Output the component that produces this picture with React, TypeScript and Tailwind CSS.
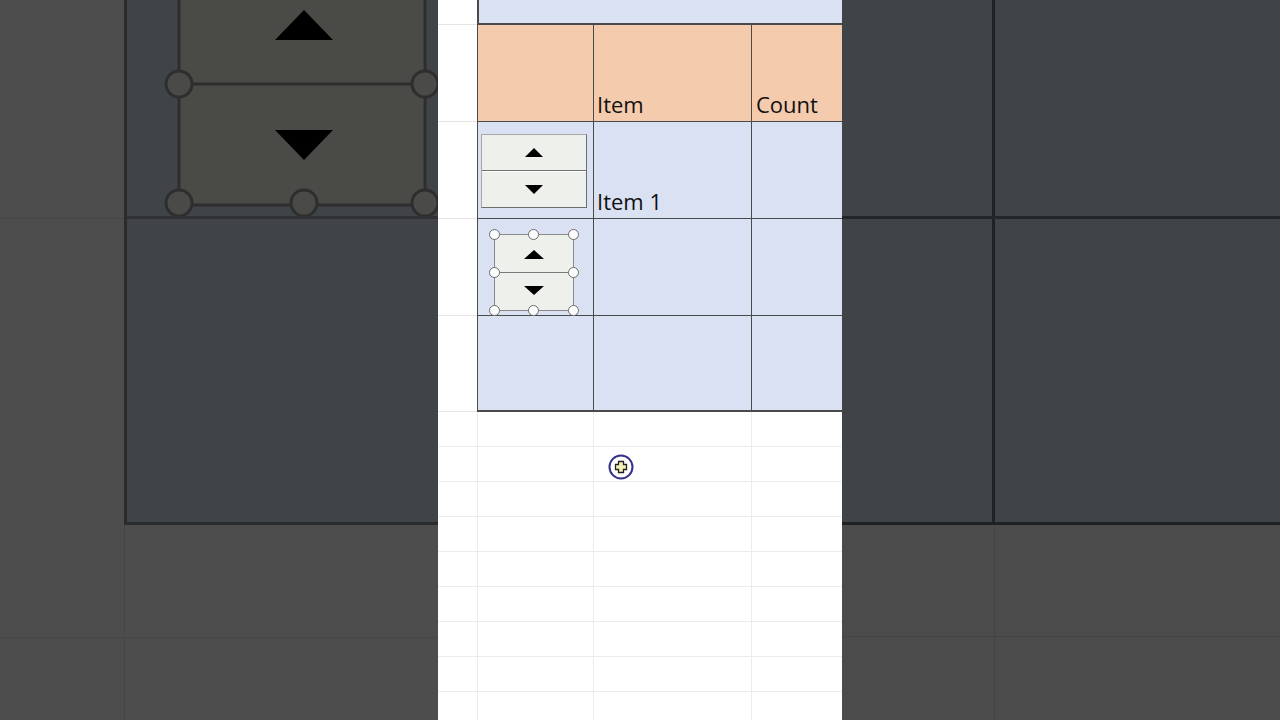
const font = { fontFamily: '"Open Sans", "Noto Sans", sans-serif' };

function Up({ w, h }: { w: number; h: number }) {
  return (
    <svg width={w} height={h} viewBox={`0 0 ${w} ${h}`}>
      <polygon points={`0,${h} ${w},${h} ${w / 2},0`} fill="#000" />
    </svg>
  );
}

function Down({ w, h }: { w: number; h: number }) {
  return (
    <svg width={w} height={h} viewBox={`0 0 ${w} ${h}`}>
      <polygon points={`0,0 ${w},0 ${w / 2},${h}`} fill="#000" />
    </svg>
  );
}

function Handle({ className }: { className: string }) {
  return (
    <div
      className={`absolute w-[11px] h-[11px] rounded-full bg-white border border-[#6b6b6b] ${className}`}
    />
  );
}

function LeftPane() {
  return (
    <div className="w-[438px] h-full bg-[#4d4d4d] flex flex-col">
      <div className="flex h-[525px]">
        <div className="w-[124px] flex flex-col">
          <div className="h-[219px] border-b border-[#464646]" />
        </div>
        <div className="flex-1 bg-[#404449] border-l-[3px] border-b-[3px] border-[#2a2b2d] flex flex-col">
          <div className="h-[219px] border-b-[3px] border-[#2f3134] relative overflow-hidden">
            {/* zoomed spinner control */}
            <svg className="absolute left-0 top-0" width="313" height="216" viewBox="0 0 313 216">
              <rect x="52" y="-40" width="246" height="245" fill="#4a4a47" stroke="#2e2e2e" strokeWidth="3" />
              <line x1="52" y1="84" x2="298" y2="84" stroke="#2e2e2e" strokeWidth="3" />
              <polygon points="148,40 206,40 177,10" fill="#000" />
              <polygon points="148,130 206,130 177,160" fill="#000" />
              {[
                [52, 84],
                [298, 84],
                [52, 203],
                [177, 203],
                [298, 203],
              ].map(([cx, cy], i) => (
                <circle key={i} cx={cx} cy={cy} r="13" fill="#4a4a48" stroke="#2e2e2e" strokeWidth="3" />
              ))}
            </svg>
          </div>
        </div>
      </div>
      <div className="flex h-[113px] border-b border-[#464646]">
        <div className="w-[125px] border-r border-[#464646]" />
      </div>
      <div className="flex flex-1">
        <div className="w-[125px] border-r border-[#464646]" />
      </div>
    </div>
  );
}

function RightPane() {
  return (
    <div className="w-[438px] h-full bg-[#4b4b4b] flex flex-col">
      <div className="h-[525px] bg-[#404449] border-b-[3px] border-[#1f2225] flex flex-col">
        <div className="flex h-[219px] border-b-[3px] border-[#23262a]">
          <div className="w-[153px] border-r-[3px] border-[#1f2225]" />
        </div>
        <div className="flex flex-1">
          <div className="w-[153px] border-r-[3px] border-[#1f2225]" />
        </div>
      </div>
      <div className="flex h-[112px] border-b border-[#444]">
        <div className="w-[153px] border-r border-[#444]" />
      </div>
      <div className="flex flex-1">
        <div className="w-[153px] border-r border-[#444]" />
      </div>
    </div>
  );
}

const colA = "w-[39px] shrink-0 border-b border-[#e4e4e4]";
const dark = "border-[#4a4a4a]";

function BodyRow({
  h,
  bg,
  b,
  c,
  d,
}: {
  h: string;
  bg: string;
  b?: React.ReactNode;
  c?: React.ReactNode;
  d?: React.ReactNode;
}) {
  return (
    <div className={`flex ${h}`}>
      <div className={colA} />
      <div className={`w-[116px] shrink-0 border-l border-b ${dark} ${bg} relative`}>{b}</div>
      <div className={`w-[158px] shrink-0 border-l border-b ${dark} ${bg} flex items-end pl-[3px] pb-[6px]`}>
        {c}
      </div>
      <div className={`flex-1 border-l border-b ${dark} ${bg} flex items-end pl-[4px] pb-[6px]`}>{d}</div>
    </div>
  );
}

function GridRow({ children }: { children?: React.ReactNode }) {
  return (
    <div className="flex h-[35px] shrink-0">
      <div className="w-[39px] shrink-0 border-b border-[#ebebeb]" />
      <div className="w-[116px] shrink-0 border-l border-b border-[#ebebeb]" />
      <div className="w-[158px] shrink-0 border-l border-b border-[#ebebeb] relative">{children}</div>
      <div className="flex-1 border-l border-b border-[#ebebeb]" />
    </div>
  );
}

function Sheet() {
  return (
    <div className="w-[404px] h-full bg-white flex flex-col overflow-hidden text-[22px] leading-none text-[#111]" style={font}>
      <div className="flex h-[25px] shrink-0">
        <div className={colA} />
        <div className={`flex-1 bg-[#d9e1f2] border-l-2 border-b-2 ${dark}`} />
      </div>
      <BodyRow h="h-[97px] shrink-0" bg="bg-[#f5cbad]" c={<span>Item</span>} d={<span>Count</span>} />
      <BodyRow
        h="h-[97px] shrink-0"
        bg="bg-[#d9e1f2]"
        b={
          <div className="ml-[3px] mt-[12px] w-[106px] h-[74px] bg-[#eef0ec] border border-[#a8a8a8] border-r-[#6e6e6e] border-b-[#6e6e6e] flex flex-col">
            <div className="flex-1 flex items-center justify-center border-b border-[#707070]">
              <Up w={18} h={9} />
            </div>
            <div className="flex-1 flex items-center justify-center border-t border-white">
              <Down w={18} h={9} />
            </div>
          </div>
        }
        c={<span>Item 1</span>}
      />
      <BodyRow
        h="h-[97px] shrink-0"
        bg="bg-[#d9e1f2]"
        b={
          <div className="absolute left-[16px] top-[15px] w-[80px] h-[77px]">
            <div className="w-full h-full bg-[#eef0ec] border border-[#8a8a8a] flex flex-col">
              <div className="flex-1 flex items-center justify-center border-b border-[#7a7a7a] pt-[2px]">
                <Up w={20} h={9} />
              </div>
              <div className="flex-1 flex items-center justify-center pb-[2px]">
                <Down w={20} h={9} />
              </div>
            </div>
            <Handle className="-left-[5px] -top-[5px]" />
            <Handle className="left-[34px] -top-[5px]" />
            <Handle className="-right-[5px] -top-[5px]" />
            <Handle className="-left-[5px] top-[33px]" />
            <Handle className="-right-[5px] top-[33px]" />
            <Handle className="-left-[5px] -bottom-[5px]" />
            <Handle className="left-[34px] -bottom-[5px]" />
            <Handle className="-right-[5px] -bottom-[5px]" />
          </div>
        }
      />
      <div className="flex h-[96px] shrink-0">
        <div className={colA} />
        <div className={`w-[116px] shrink-0 border-l border-b-2 ${dark} bg-[#d9e1f2]`} />
        <div className={`w-[158px] shrink-0 border-l border-b-2 ${dark} bg-[#d9e1f2]`} />
        <div className={`flex-1 border-l border-b-2 ${dark} bg-[#d9e1f2]`} />
      </div>
      <GridRow />
      <GridRow>
        {/* excel cell cursor */}
        <svg className="absolute left-[14px] top-[7px]" width="26" height="26" viewBox="0 0 26 26">
          <circle cx="13" cy="13" r="11.5" fill="#fff" stroke="#35308a" strokeWidth="2" />
          <path
            d="M10.5 7.5 H15.5 V10.5 H18.5 V15.5 H15.5 V18.5 H10.5 V15.5 H7.5 V10.5 H10.5 Z"
            fill="#f3f1b8"
            stroke="#222"
            strokeWidth="1.3"
          />
        </svg>
      </GridRow>
      <GridRow />
      <GridRow />
      <GridRow />
      <GridRow />
      <GridRow />
      <GridRow />
      <GridRow />
    </div>
  );
}

export default function App() {
  return (
    <div className="w-[1280px] h-[720px] flex overflow-hidden">
      <LeftPane />
      <Sheet />
      <RightPane />
    </div>
  );
}
